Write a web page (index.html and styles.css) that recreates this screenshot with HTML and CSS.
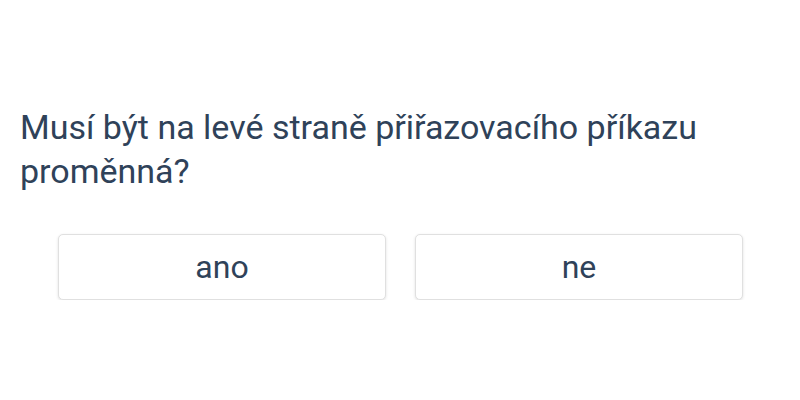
FILE: index.html
```html
<!DOCTYPE html>
<html lang="cs">
<head>
<meta charset="utf-8">
<link rel="stylesheet" href="styles.css">
</head>
<body>
<main class="quiz">
  <h1 class="question">Musí být na levé straně přiřazovacího příkazu proměnná?</h1>
  <div class="answers">
    <button class="answer">ano</button>
    <button class="answer">ne</button>
  </div>
</main>
</body>
</html>
```

FILE: styles.css
```css
html, body {
  margin: 0;
  padding: 0;
  background: #ffffff;
}
body {
  font-family: Roboto, "Liberation Sans", sans-serif;
  color: #2f4259;
}
.quiz {
  padding: 105px 20px 0 20px;
}
.question {
  margin: 0;
  font-size: 34px;
  font-weight: 400;
  line-height: 44px;
  max-width: 720px;
}
.answers {
  display: flex;
  gap: 29px;
  margin: 41px 37px 0 38px;
}
.answer {
  flex: 1;
  height: 66px;
  background: #ffffff;
  border: 1px solid #e0e0e0;
  border-radius: 5px;
  box-shadow: 0 1px 3px rgba(0, 0, 0, 0.12);
  font-family: Roboto, "Liberation Sans", sans-serif;
  font-size: 32px;
  color: #2f4259;
  padding: 0;
}
```
